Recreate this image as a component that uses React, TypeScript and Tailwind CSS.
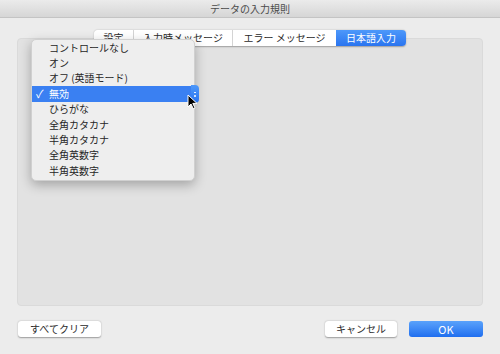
import React from "react";

const items = [
  "コントロールなし",
  "オン",
  "オフ (英語モード)",
  "無効",
  "ひらがな",
  "全角カタカナ",
  "半角カタカナ",
  "全角英数字",
  "半角英数字",
];

export default function App() {
  const font = { fontFamily: '"Noto Sans CJK JP", "Noto Sans", sans-serif' };
  return (
    <div
      className="relative w-[500px] h-[354px] bg-[#ececec] flex flex-col overflow-hidden text-[#2a2a2a]"
      style={font}
    >
      {/* title bar */}
      <div className="h-[18px] shrink-0 flex items-center justify-center bg-gradient-to-b from-[#ebebeb] to-[#d6d6d6] border-b border-[#c4c4c4] text-[10px] text-[#4a4a4a] leading-none">
        データの入力規則
      </div>

      <div className="flex flex-col px-[17px] pt-[12px]">
        {/* tabs */}
        <div className="relative z-10 flex justify-center -mb-[8px]">
          <div className="flex h-[16px] rounded-[4px] shadow-[0_0.5px_1.5px_rgba(0,0,0,0.3)] text-[10px] leading-none overflow-hidden">
            <div className="w-[40px] flex items-center justify-center bg-white border-r border-[#d4d4d4]">設定</div>
            <div className="w-[99px] flex items-center justify-center bg-white border-r border-[#d4d4d4]">入力時メッセージ</div>
            <div className="w-[103px] flex items-center justify-center bg-white">エラー メッセージ</div>
            <div className="w-[70px] flex items-center justify-center bg-gradient-to-b from-[#4d98fa] to-[#2a74ef] text-white">日本語入力</div>
          </div>
        </div>
        {/* group box */}
        <div className="h-[268px] rounded-[4px] bg-[#e2e2e2] border border-[#dadada]" />

        {/* buttons */}
        <div className="flex items-center mt-[15px] pl-[1px] text-[10px] leading-none">
          <div className="w-[83px] h-[16px] flex items-center justify-center bg-white rounded-[3px] shadow-[0_0.5px_1.5px_rgba(0,0,0,0.35)]">
            すべてクリア
          </div>
          <div className="flex-1" />
          <div className="w-[72px] h-[16px] flex items-center justify-center bg-white rounded-[3px] shadow-[0_0.5px_1.5px_rgba(0,0,0,0.35)]">
            キャンセル
          </div>
          <div className="w-[74px] h-[16px] ml-[12px] flex items-center justify-center rounded-[3px] bg-gradient-to-b from-[#5aa2fb] to-[#1f6eef] text-white text-[11px]">
            OK
          </div>
        </div>
      </div>

      {/* dropdown menu */}
      <div className="absolute z-20 left-[31px] top-[39px] w-[164px] h-[142px] rounded-[5px] bg-[#eeeeee] border border-[#d0d0d0] shadow-[0_4px_12px_rgba(0,0,0,0.28)] text-[10px] leading-none overflow-hidden">
        {items.map((t, i) => {
          const sel = i === 3;
          return (
            <div
              key={t}
              className={
                "h-[15.4px] flex items-center pl-[17px] relative " +
                (sel ? "bg-[#3a80f2] text-white mr-[3px]" : "text-[#262626]")
              }
            >
              {sel && (
                <span className="absolute left-[4px] top-0 h-full flex items-center text-[11px]">✓</span>
              )}
              {t}
            </div>
          );
        })}
      </div>

      {/* arrow tab end visible beyond menu */}
      <div className="absolute z-30 left-[191px] top-[85px] w-[8px] h-[18px] rounded-r-[4px] bg-gradient-to-b from-[#4d98fa] to-[#2a74ef] flex flex-col items-center justify-center gap-[2px]">
        <div className="w-[1.5px] h-[1.5px] bg-white rounded-full" />
        <div className="w-[1.5px] h-[1.5px] bg-white rounded-full" />
      </div>

      {/* cursor */}
      <svg className="absolute z-40 left-[187px] top-[94px]" width="12" height="16" viewBox="0 0 12 16">
        <path d="M1 1 L1 13 L4 10 L6.2 14.6 L8 13.8 L5.8 9.4 L10 9.4 Z" fill="black" stroke="white" strokeWidth="1" strokeLinejoin="round" />
      </svg>
    </div>
  );
}
